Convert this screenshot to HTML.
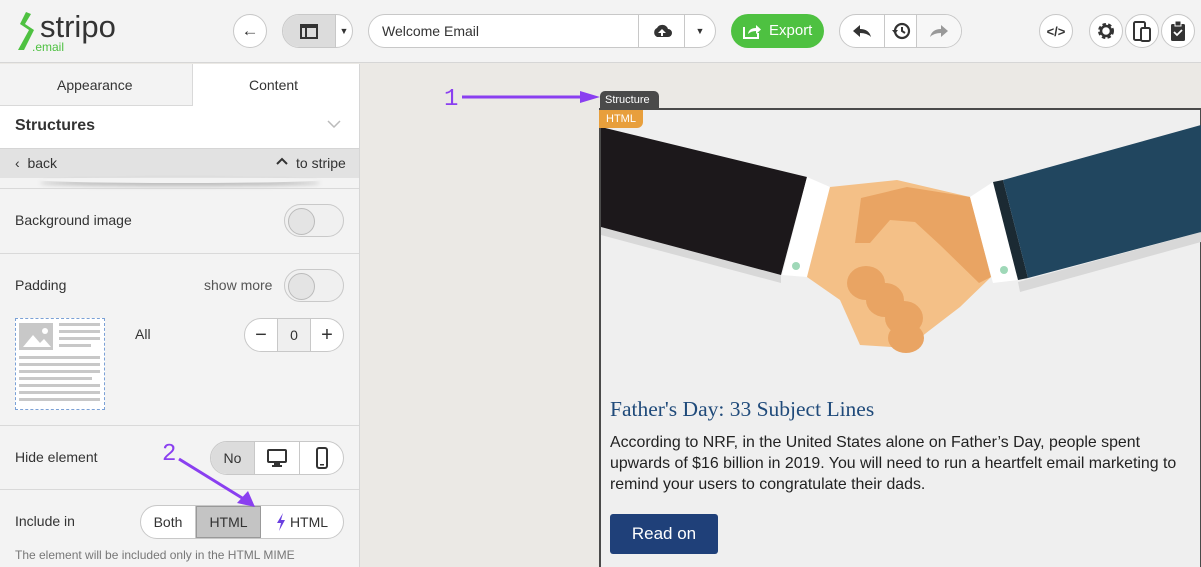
<!DOCTYPE html>
<html><head><meta charset="utf-8"><style>
*{box-sizing:border-box;margin:0;padding:0}
body{width:1201px;height:567px;overflow:hidden;background:#ebe9e5;font-family:"Liberation Sans",sans-serif;color:#333;position:relative}
.a{position:absolute}
.top{left:0;top:0;width:1201px;height:63px;background:#f3f3f3;border-bottom:1px solid #d6d6d6}
.circ{position:absolute;border:1px solid #c8c8c8;background:#fff;border-radius:18px;height:34px;top:14px}
.panel{left:0;top:64px;width:360px;height:503px;background:#f3f3f3;border-right:1px solid #d6d6d6}
.t{position:absolute;font-size:14px;color:#333}
.hr{position:absolute;left:0;width:359px;height:1px;background:#d9d9d9}
.tog{position:absolute;width:60px;height:33px;border:1px solid #c9c9c9;border-radius:17px;background:#f0f0f0}
.tog:after{content:"";position:absolute;left:3px;top:3px;width:25px;height:25px;border-radius:50%;border:1px solid #bbb;background:#e4e4e4}
.seg{position:absolute;border:1px solid #c8c8c8;border-radius:17px;background:#fff;height:34px;display:flex;overflow:hidden}
.seg div{border-right:1px solid #c8c8c8;display:flex;align-items:center;justify-content:center;font-size:14px;color:#333}
.seg div:last-child{border-right:none}
</style></head><body>
<div class="a top"></div>
<svg class="a" style="left:12px;top:10px" width="30" height="42" viewBox="0 0 30 42"><path d="M14 2 L8 14 L17 20 L6 40 L12 40 L22 20 L13 14 L19 4Z" fill="#4ec141"/></svg>
<div class="a" style="left:40px;top:9px;font-size:31px;color:#333">stripo</div>
<div class="a" style="left:32px;top:40px;font-size:12px;color:#4ec141">.email</div>
<div class="circ" style="left:233px;width:34px;display:flex;align-items:center;justify-content:center;font-size:17px;font-weight:bold">&#8592;</div>
<div class="circ" style="left:282px;width:71px;overflow:hidden;display:flex">
 <div style="width:52px;background:#dcdcdc;display:flex;align-items:center;justify-content:center"><div style="width:18px;height:15px;border:2px solid #333;border-top-width:4px;position:relative"><div style="position:absolute;left:3px;top:0;width:2px;height:9px;background:#333"></div></div></div>
 <div style="flex:1;border-left:1px solid #c8c8c8;font-size:9px;display:flex;align-items:center;justify-content:center">&#9660;</div></div>
<div class="circ" style="left:368px;width:348px;display:flex;overflow:hidden">
 <div style="width:269px;padding-left:13px;font-size:14px;line-height:32px">Welcome Email</div>
 <div style="width:46px;border-left:1px solid #c8c8c8;display:flex;align-items:center;justify-content:center"><svg width="20" height="16"><path d="M5 14 a5 5 0 0 1 0-9 a6 6 0 0 1 11 1 a4 4 0 0 1 0 8Z" fill="#333"/><path d="M10 6 l-4 4 h3 v3 h2 v-3 h3Z" fill="#fff"/></svg></div>
 <div style="flex:1;border-left:1px solid #c8c8c8;font-size:9px;display:flex;align-items:center;justify-content:center">&#9660;</div></div>
<div class="a" style="left:731px;top:14px;width:93px;height:34px;border-radius:17px;background:#4ec141;color:#fff;font-size:15px;line-height:34px;padding-left:38px">Export</div>
<svg class="a" style="left:742px;top:22px" width="20" height="18"><path d="M2 5 v11 h14 v-5" fill="none" stroke="#fff" stroke-width="2"/><path d="M6 12 q1-6 8-6 v-3 l5 4.5 l-5 4.5 v-3 q-5 0-8 3Z" fill="#fff"/></svg>
<div class="circ" style="left:839px;width:123px;display:flex;overflow:hidden">
 <div style="width:44px;display:flex;align-items:center;justify-content:center"><svg width="20" height="16"><path d="M1 8 l7-6 v4 q9 0 11 8 q-4-4-11-4 v4Z" fill="#333"/></svg></div>
 <div style="width:33px;border-left:1px solid #c8c8c8;border-right:1px solid #c8c8c8;display:flex;align-items:center;justify-content:center"><svg width="20" height="20"><circle cx="11" cy="10" r="7" fill="none" stroke="#333" stroke-width="2.2"/><path d="M11 6 v4 l3 2" fill="none" stroke="#333" stroke-width="2"/><path d="M1 9 h6 l-3 4Z" fill="#333"/></svg></div>
 <div style="flex:1;display:flex;align-items:center;justify-content:center;background:#f7f7f7"><svg width="20" height="16"><path d="M19 8 l-7-6 v4 q-9 0-11 8 q4-4 11-4 v4Z" fill="#999"/></svg></div></div>
<div class="circ" style="left:1039px;width:34px;display:flex;align-items:center;justify-content:center;font-size:13px;font-weight:bold">&lt;/&gt;</div>
<div class="circ" style="left:1089px;width:34px;display:flex;align-items:center;justify-content:center"><svg width="20" height="20"><circle cx="10" cy="10" r="6" fill="none" stroke="#333" stroke-width="4" stroke-dasharray="3 2"/><circle cx="10" cy="10" r="5" fill="none" stroke="#333" stroke-width="2.5"/></svg></div>
<div class="circ" style="left:1125px;width:34px;display:flex;align-items:center;justify-content:center"><svg width="20" height="22"><rect x="2" y="2" width="11" height="18" rx="1.5" fill="none" stroke="#333" stroke-width="2"/><rect x="9" y="8" width="9" height="13" rx="1.5" fill="#fff" stroke="#333" stroke-width="2"/></svg></div>
<div class="circ" style="left:1161px;width:34px;display:flex;align-items:center;justify-content:center"><svg width="18" height="22"><rect x="2" y="4" width="14" height="17" rx="1.5" fill="#333"/><rect x="6" y="1" width="6" height="5" fill="#333" stroke="#fff" stroke-width="1"/><path d="M5 12 l3 3 l5-5" fill="none" stroke="#fff" stroke-width="1.8"/></svg></div>

<div class="a panel"></div>
<div class="a" style="left:193px;top:64px;width:166px;height:42px;background:#fff"></div>
<div class="hr" style="top:105px;width:193px"></div>
<div class="a" style="left:192px;top:64px;width:1px;height:42px;background:#d9d9d9"></div>
<div class="t" style="left:57px;top:77px">Appearance</div>
<div class="t" style="left:249px;top:77px">Content</div>
<div class="a" style="left:0;top:106px;width:359px;height:42px;background:#fff"></div>
<div class="t" style="left:15px;top:117px;font-size:16px;font-weight:bold;color:#333">Structures</div>
<svg class="a" style="left:327px;top:120px" width="14" height="9"><path d="M1 1 l6 6 l6-6" fill="none" stroke="#bbb" stroke-width="1.5"/></svg>
<div class="a" style="left:0;top:148px;width:359px;height:30px;background:#e2e2e2;border-top:1px solid #d5d5d5"></div>
<div class="a" style="left:40px;top:177px;width:280px;height:6px;border-radius:50%;box-shadow:0 3px 5px rgba(0,0,0,.25)"></div>
<div class="t" style="left:15px;top:155px">&#8249;&nbsp; back</div>
<svg class="a" style="left:276px;top:157px" width="12" height="8"><path d="M1 7 l5-5 l5 5" fill="none" stroke="#333" stroke-width="2"/></svg>
<div class="t" style="left:296px;top:155px">to stripe</div>
<div class="hr" style="top:188px"></div>
<div class="t" style="left:15px;top:212px">Background image</div>
<div class="tog" style="left:284px;top:204px"></div>
<div class="hr" style="top:253px"></div>
<div class="t" style="left:15px;top:277px">Padding</div>
<div class="t" style="left:204px;top:277px;color:#555">show more</div>
<div class="tog" style="left:284px;top:269px"></div>
<div class="a" style="left:15px;top:318px;width:90px;height:92px;border:1px dashed #7ba1d6;background:#fff"></div>
<svg class="a" style="left:19px;top:323px" width="84" height="84"><rect x="0" y="0" width="34" height="27" fill="#c8c8c8"/><path d="M4 24 l10-12 l7 8 l4-4 l7 8Z" fill="#fff"/><circle cx="26" cy="8" r="3" fill="#fff"/>
<g fill="#c8c8c8"><rect x="40" y="0" width="41" height="3"/><rect x="40" y="7" width="41" height="3"/><rect x="40" y="14" width="41" height="3"/><rect x="40" y="21" width="32" height="3"/><rect x="0" y="33" width="81" height="3"/><rect x="0" y="40" width="81" height="3"/><rect x="0" y="47" width="81" height="3"/><rect x="0" y="54" width="73" height="3"/><rect x="0" y="61" width="81" height="3"/><rect x="0" y="68" width="81" height="3"/><rect x="0" y="75" width="81" height="3"/></g></svg>
<div class="t" style="left:135px;top:326px">All</div>
<div class="seg" style="left:244px;top:318px;width:100px">
 <div style="width:33px;font-size:20px">&minus;</div><div style="width:33px;background:#efefef">0</div><div style="flex:1;font-size:20px">+</div></div>
<div class="hr" style="top:425px"></div>
<div class="t" style="left:15px;top:449px">Hide element</div>
<div class="seg" style="left:210px;top:441px;width:134px">
 <div style="width:44px;background:#dcdcdc">No</div>
 <div style="width:45px"><svg width="20" height="18"><rect x="1" y="1" width="18" height="12" rx="1" fill="none" stroke="#333" stroke-width="2"/><rect x="7" y="14" width="6" height="2" fill="#333"/><rect x="5" y="16" width="10" height="2" fill="#333"/></svg></div>
 <div style="flex:1"><svg width="12" height="22"><rect x="1" y="1" width="10" height="20" rx="2" fill="none" stroke="#333" stroke-width="2"/><rect x="4" y="17" width="4" height="1.5" fill="#333"/></svg></div></div>
<div class="hr" style="top:489px"></div>
<div class="t" style="left:15px;top:513px">Include in</div>
<div class="seg" style="left:140px;top:505px;width:204px">
 <div style="width:55px">Both</div>
 <div style="width:65px;background:#c4c4c4;border:1px solid #999">HTML</div>
 <div style="flex:1"><svg width="10" height="18" style="margin-right:4px"><path d="M7 0 L1 10 h4 L3 18 L9 7 h-4Z" fill="#6a3fe0"/></svg>HTML</div></div>
<div class="t" style="left:15px;top:548px;font-size:12px;color:#777">The element will be included only in the HTML MIME</div>
<div class="a" style="left:162px;top:441px;font-size:24px;color:#8a3ff0;font-family:'Liberation Mono',monospace">2</div>
<svg class="a" style="left:175px;top:455px" width="90" height="60"><path d="M4 4 L72 46" stroke="#8a3ff0" stroke-width="3"/><path d="M80 52 L62 48 L73 36Z" fill="#8a3ff0"/></svg>

<div class="a" style="left:444px;top:86px;font-size:24px;color:#8a3ff0;font-family:'Liberation Mono',monospace">1</div>
<svg class="a" style="left:462px;top:88px" width="140" height="20"><path d="M0 9 H125" stroke="#8a3ff0" stroke-width="3"/><path d="M138 9 L118 3 L118 15Z" fill="#8a3ff0"/></svg>
<div class="a" style="left:600px;top:91px;width:59px;height:18px;background:#4a4a4a;border-radius:5px 5px 0 0;color:#fff;font-size:11px;line-height:19px;padding-left:5px">Structure</div>
<div class="a" style="left:599px;top:108px;width:602px;height:459px;background:#efefef;border:2px solid #4a4a4a;border-right:1px solid #4a4a4a;border-bottom:none"></div>
<svg class="a" style="left:601px;top:110px" width="600" height="260" viewBox="601 110 600 260">
 <path d="M601 227 L781 275 L781 283 L601 235Z" fill="#d8d8d8"/>
 <path d="M1018 282 L1201 232 L1201 242 L1020 292Z" fill="#d8d8d8"/>
 <path d="M601 127 L807 177 L781 275 L601 227Z" fill="#1c181b"/>
 <path d="M807 177 L830 187 L807 277 L782 275Z" fill="#fff"/>
 <path d="M830 187 L897 180 L970 197 L991 277 L960 307 L930 330 L907 348 L860 345 L840 300 L807 277Z" fill="#f4c087"/>
 <path d="M861 198 L907 187 L970 197 L991 277 L979 283 L940 245 L915 222 L890 220 L870 243 L855 243Z" fill="#e9a463"/>
 <g fill="#e9a463"><ellipse cx="866" cy="283" rx="19" ry="17"/><ellipse cx="885" cy="300" rx="19" ry="17"/><ellipse cx="904" cy="318" rx="19" ry="17"/><ellipse cx="906" cy="338" rx="18" ry="15"/></g>
 <path d="M970 197 L993 182 L1018 280 L993 283Z" fill="#fff"/>
 <path d="M993 182 L1003 180 L1028 278 L1018 280Z" fill="#1b2a33"/>
 <path d="M1003 180 L1201 125 L1201 232 L1028 278Z" fill="#21465f"/>
 <circle cx="796" cy="266" r="4" fill="#9fd8b8"/><circle cx="1004" cy="270" r="4" fill="#9fd8b8"/>
</svg>
<div class="a" style="left:599px;top:110px;width:44px;height:18px;background:#e89f3c;border-radius:0 0 6px 0;color:#fff;font-size:11px;line-height:18px;padding-left:7px">HTML</div>
<div class="a" style="left:610px;top:397px;font-family:'Liberation Serif',serif;font-size:21.5px;color:#1f4a7a">Father's Day: 33 Subject Lines</div>
<div class="a" style="left:610px;top:432px;width:590px;font-size:15.9px;line-height:21px;color:#222;white-space:nowrap">According to NRF, in the United States alone on Father’s Day, people spent<br>upwards of $16 billion in 2019. You will need to run a heartfelt email marketing to<br>remind your users to congratulate their dads.</div>
<div class="a" style="left:610px;top:514px;width:108px;height:40px;background:#1f4079;border-radius:3px;color:#fff;font-size:17px;line-height:40px;text-align:center">Read on</div>
</body></html>
